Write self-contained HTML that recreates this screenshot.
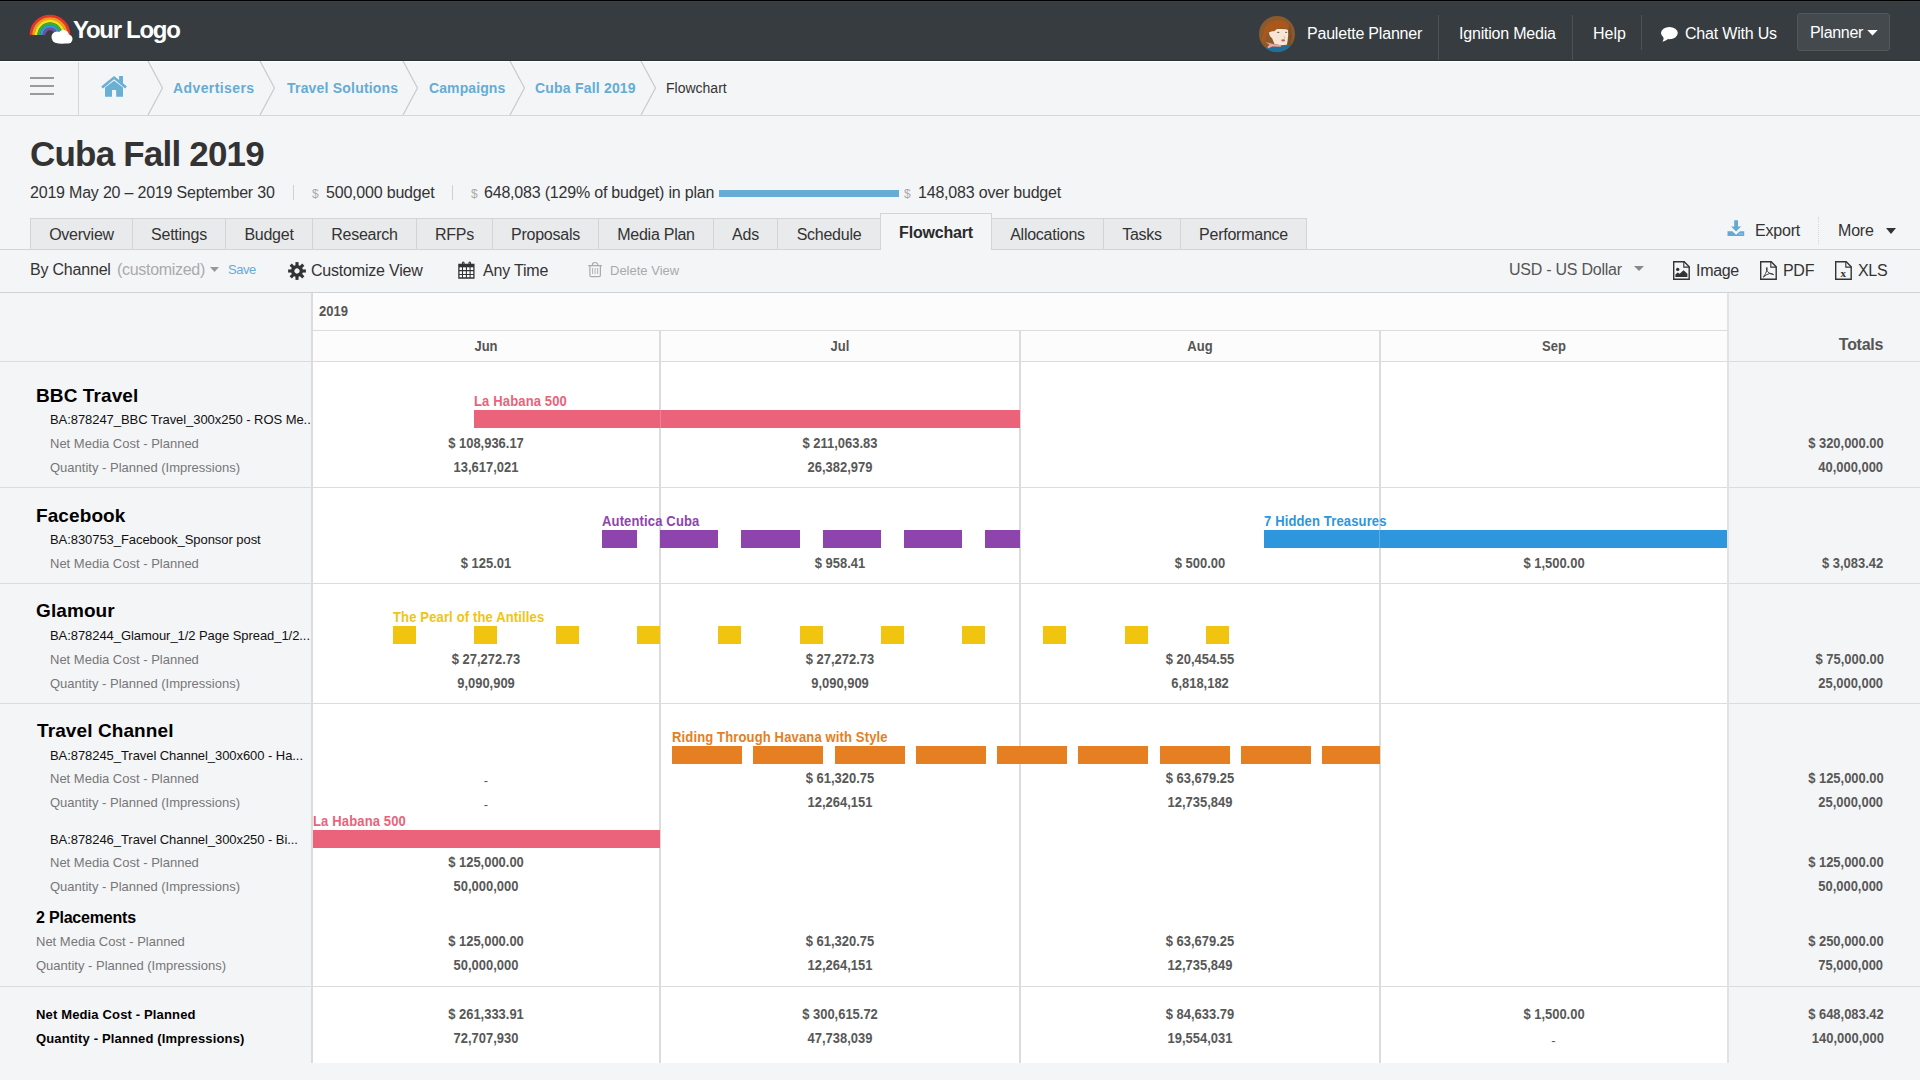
<!DOCTYPE html>
<html><head><meta charset="utf-8"><title>Cuba Fall 2019 - Flowchart</title>
<style>
html,body{margin:0;padding:0;}
body{width:1920px;height:1080px;overflow:hidden;position:relative;background:#f4f5f7;font-family:"Liberation Sans", sans-serif;}
.t{position:absolute;white-space:nowrap;line-height:normal;}
.r{position:absolute;}
</style></head><body>
<div class="r" style="left:0px;top:0px;width:1920px;height:61px;background:#363c40;"></div>
<div class="r" style="left:0px;top:60px;width:1920px;height:1px;background:#2b3033;"></div>
<div class="r" style="left:0px;top:0px;width:1920px;height:1px;background:#000;"></div>
<div class="r" style="left:0px;top:1px;width:1920px;height:1px;background:#3c4246;"></div>
<div class="r" style="left:0px;top:61px;width:1920px;height:1px;background:#ffffff;"></div>
<svg class="r" style="left:28px;top:12px" width="48" height="34" viewBox="0 0 48 34">
<g fill="none" stroke-width="2.7">
<path d="M3 23 A19 19 0 0 1 41 23" stroke="#e8322a"/>
<path d="M5.6 23 A16.4 16.4 0 0 1 38.4 23" stroke="#f39a1e"/>
<path d="M8.2 23 A13.8 13.8 0 0 1 35.8 23" stroke="#f2e21b"/>
<path d="M10.8 23 A11.2 11.2 0 0 1 33.2 23" stroke="#3dab3a"/>
<path d="M13.4 23 A8.6 8.6 0 0 1 30.6 23" stroke="#2a9ad8"/>
<path d="M16 23 A6 6 0 0 1 28 23" stroke="#7a4ca0"/>
</g>
<g fill="#fff"><circle cx="29" cy="25" r="5.5"/><circle cx="35.5" cy="23.5" r="5.5"/><circle cx="40" cy="27" r="4.5"/><ellipse cx="34" cy="28" rx="9.5" ry="3.8"/></g>
</svg>
<div class="t" style="left:73px;top:16px;font-size:24px;font-weight:700;color:#fff;letter-spacing:-1.3px;">Your Logo</div>
<svg class="r" style="left:1259px;top:16px" width="36" height="36" viewBox="0 0 36 36">
<defs><clipPath id="av"><circle cx="18" cy="18" r="18"/></clipPath></defs>
<g clip-path="url(#av)">
<rect width="36" height="36" fill="#8a5a2c"/>
<path d="M31 8 L33 20 L31.5 30 L29 30 L30 14Z" fill="#7a4e26"/>
<path d="M2.4 24.7 L4 18 L6 11 L10.2 5.9 L15.5 4.3 L22 4.1 L27 5.5 L29.8 9.6 L29.4 13.3 L27 12.9 L24.5 11.6 L22 12.4 L18.8 12.4 L15.1 15.3 L13.9 18.2 L12.2 16.5 L9.8 14.9 L8 19 L6.1 25 L4 27Z" fill="#a8581c"/>
<path d="M9.8 16.5 L13.1 15.3 L15.1 15.3 L18 12.9 L22 12.9 L27 13.3 L29 14.1 L29.2 19 L28.6 24.7 L27.8 28.8 L22 29.2 L15.5 28 L13.1 22.2 L11 20.2Z" fill="#f7e6d3"/>
<path d="M17.6 16.3 Q19.2 15.2 20.8 16.3 Q19.2 17.2 17.6 16.3Z" fill="#2a2018"/>
<path d="M25.8 16.3 Q27.2 15.3 28.4 16.3 Q27.2 17.1 25.8 16.3Z" fill="#2a2018"/>
<path d="M25 20 L26 21.8 L24.8 22" fill="none" stroke="#c9a58f" stroke-width="0.6"/>
<ellipse cx="24.2" cy="24.4" rx="1.9" ry="1.1" fill="#b3625f"/>
<path d="M7.3 31.2 L13.5 30 L22 30.4 L29.8 29.6 L32.7 31.2 L34 36 L6 36Z" fill="#1e6f9e"/>
<path d="M6.5 25.9 L13.9 28 L22 29.2 L22 30.8 L13.5 30.4 L9.4 32.3 L8.2 31 L10.6 28.8Z" fill="#f1a3a0"/>
</g></svg>
<div class="t" style="left:1307px;top:25px;font-size:16px;font-weight:400;color:#fff;letter-spacing:-0.2px;">Paulette Planner</div>
<div class="r" style="left:1438px;top:15px;width:1px;height:45px;background:#4c5256;"></div>
<div class="t" style="left:1459px;top:25px;font-size:16px;font-weight:400;color:#fff;letter-spacing:-0.2px;">Ignition Media</div>
<div class="r" style="left:1572px;top:15px;width:1px;height:45px;background:#4c5256;"></div>
<div class="t" style="left:1593px;top:25px;font-size:16px;font-weight:400;color:#fff;">Help</div>
<div class="r" style="left:1641px;top:15px;width:1px;height:35px;background:#4c5256;"></div>
<svg class="r" style="left:1660px;top:26px" width="19" height="17" viewBox="0 0 19 17">
<ellipse cx="9.4" cy="7.1" rx="8.4" ry="6.1" fill="#fff"/><path d="M3.5 10.5 Q4.2 13.5 2.5 15.8 Q6 15 8.5 12.8Z" fill="#fff"/></svg>
<div class="t" style="left:1685px;top:25px;font-size:16px;font-weight:400;color:#fff;letter-spacing:-0.2px;">Chat With Us</div>
<div class="r" style="left:1797px;top:13px;width:93px;height:38px;background:#44494e;border:1px solid #55585a;border-radius:3px;box-sizing:border-box;"></div>
<div class="t" style="left:1810px;top:24px;font-size:16px;font-weight:400;color:#fff;letter-spacing:-0.3px;">Planner</div>
<svg class="r" style="left:1867px;top:30px" width="11" height="6" viewBox="0 0 11 6"><path d="M0.3 0H10.7L5.5 5.4Z" fill="#fff"/></svg>
<div class="r" style="left:0px;top:62px;width:1920px;height:53px;background:#f4f5f7;"></div>
<div class="r" style="left:0px;top:115px;width:1920px;height:1px;background:#d5d6d8;"></div>
<div class="r" style="left:30px;top:77px;width:24px;height:2px;background:#9a9a9a;"></div>
<div class="r" style="left:30px;top:85px;width:24px;height:2px;background:#9a9a9a;"></div>
<div class="r" style="left:30px;top:93px;width:24px;height:2px;background:#9a9a9a;"></div>
<div class="r" style="left:78px;top:62px;width:1px;height:53px;background:#d5d6d8;"></div>
<svg class="r" style="left:101px;top:75px" width="27" height="23" viewBox="0 0 27 23">
<path d="M13.1 0.9 L0.2 11.4 L1.9 13.4 L13.1 4.2 L24.2 13.4 L25.9 11.4 L22 8.2 V1.1 H18.1 V5 Z" fill="#6aafd4"/>
<path d="M4 12.5 L13.1 5.7 L22 12.5 V21.7 H15.2 V15.1 H11 V21.7 H4Z" fill="#6aafd4"/>
</svg>
<svg class="r" style="left:147px;top:61px" width="18" height="54" viewBox="0 0 18 54"><path d="M1 0 L15.5 27 L1 54" fill="none" stroke="#c9cacc" stroke-width="1.2"/></svg>
<svg class="r" style="left:259px;top:61px" width="18" height="54" viewBox="0 0 18 54"><path d="M1 0 L15.5 27 L1 54" fill="none" stroke="#c9cacc" stroke-width="1.2"/></svg>
<svg class="r" style="left:402px;top:61px" width="18" height="54" viewBox="0 0 18 54"><path d="M1 0 L15.5 27 L1 54" fill="none" stroke="#c9cacc" stroke-width="1.2"/></svg>
<svg class="r" style="left:509px;top:61px" width="18" height="54" viewBox="0 0 18 54"><path d="M1 0 L15.5 27 L1 54" fill="none" stroke="#c9cacc" stroke-width="1.2"/></svg>
<svg class="r" style="left:640px;top:61px" width="18" height="54" viewBox="0 0 18 54"><path d="M1 0 L15.5 27 L1 54" fill="none" stroke="#c9cacc" stroke-width="1.2"/></svg>
<div class="t" style="left:173px;top:80px;font-size:14px;font-weight:700;color:#65acd4;letter-spacing:0.4px;">Advertisers</div>
<div class="t" style="left:287px;top:80px;font-size:14px;font-weight:700;color:#65acd4;letter-spacing:0.2px;">Travel Solutions</div>
<div class="t" style="left:429px;top:80px;font-size:14px;font-weight:700;color:#65acd4;letter-spacing:0.1px;">Campaigns</div>
<div class="t" style="left:535px;top:80px;font-size:14px;font-weight:700;color:#65acd4;letter-spacing:0.2px;">Cuba Fall 2019</div>
<div class="t" style="left:666px;top:80px;font-size:14px;font-weight:400;color:#333;">Flowchart</div>
<div class="t" style="left:30px;top:134px;font-size:35px;font-weight:700;color:#333;letter-spacing:-0.8px;">Cuba Fall 2019</div>
<div class="t" style="left:30px;top:184px;font-size:16px;font-weight:400;color:#333;letter-spacing:-0.2px;">2019 May 20 – 2019 September 30</div>
<div class="r" style="left:293px;top:185px;width:1px;height:15px;background:#cfd0d2;"></div>
<div class="t" style="left:312px;top:187px;font-size:12px;font-weight:400;color:#aaa;">$</div>
<div class="t" style="left:326px;top:184px;font-size:16px;font-weight:400;color:#333;letter-spacing:-0.2px;">500,000 budget</div>
<div class="r" style="left:452px;top:185px;width:1px;height:15px;background:#cfd0d2;"></div>
<div class="t" style="left:471px;top:187px;font-size:12px;font-weight:400;color:#aaa;">$</div>
<div class="t" style="left:484px;top:184px;font-size:16px;font-weight:400;color:#333;letter-spacing:-0.2px;">648,083 (129% of budget) in plan</div>
<div class="r" style="left:719px;top:190px;width:180px;height:7px;background:#67acd4;"></div>
<div class="t" style="left:904px;top:187px;font-size:12px;font-weight:400;color:#aaa;">$</div>
<div class="t" style="left:918px;top:184px;font-size:16px;font-weight:400;color:#333;letter-spacing:-0.2px;">148,083 over budget</div>
<div class="r" style="left:0px;top:249px;width:1920px;height:1px;background:#d3d4d6;"></div>
<div class="r" style="left:30px;top:218px;width:103px;height:31px;background:#e9eaec;border:1px solid #d3d4d6;border-bottom:none;box-sizing:border-box;"></div>
<div class="t" style="left:-218.5px;width:600px;text-align:center;top:226px;font-size:16px;font-weight:400;color:#333;letter-spacing:-0.25px;">Overview</div>
<div class="r" style="left:132px;top:218px;width:94px;height:31px;background:#e9eaec;border:1px solid #d3d4d6;border-bottom:none;box-sizing:border-box;"></div>
<div class="t" style="left:-121.0px;width:600px;text-align:center;top:226px;font-size:16px;font-weight:400;color:#333;letter-spacing:-0.25px;">Settings</div>
<div class="r" style="left:225px;top:218px;width:88px;height:31px;background:#e9eaec;border:1px solid #d3d4d6;border-bottom:none;box-sizing:border-box;"></div>
<div class="t" style="left:-31.0px;width:600px;text-align:center;top:226px;font-size:16px;font-weight:400;color:#333;letter-spacing:-0.25px;">Budget</div>
<div class="r" style="left:312px;top:218px;width:105px;height:31px;background:#e9eaec;border:1px solid #d3d4d6;border-bottom:none;box-sizing:border-box;"></div>
<div class="t" style="left:64.5px;width:600px;text-align:center;top:226px;font-size:16px;font-weight:400;color:#333;letter-spacing:-0.25px;">Research</div>
<div class="r" style="left:416px;top:218px;width:77px;height:31px;background:#e9eaec;border:1px solid #d3d4d6;border-bottom:none;box-sizing:border-box;"></div>
<div class="t" style="left:154.5px;width:600px;text-align:center;top:226px;font-size:16px;font-weight:400;color:#333;letter-spacing:-0.25px;">RFPs</div>
<div class="r" style="left:492px;top:218px;width:107px;height:31px;background:#e9eaec;border:1px solid #d3d4d6;border-bottom:none;box-sizing:border-box;"></div>
<div class="t" style="left:245.5px;width:600px;text-align:center;top:226px;font-size:16px;font-weight:400;color:#333;letter-spacing:-0.25px;">Proposals</div>
<div class="r" style="left:598px;top:218px;width:116px;height:31px;background:#e9eaec;border:1px solid #d3d4d6;border-bottom:none;box-sizing:border-box;"></div>
<div class="t" style="left:356.0px;width:600px;text-align:center;top:226px;font-size:16px;font-weight:400;color:#333;letter-spacing:-0.25px;">Media Plan</div>
<div class="r" style="left:713px;top:218px;width:65px;height:31px;background:#e9eaec;border:1px solid #d3d4d6;border-bottom:none;box-sizing:border-box;"></div>
<div class="t" style="left:445.5px;width:600px;text-align:center;top:226px;font-size:16px;font-weight:400;color:#333;letter-spacing:-0.25px;">Ads</div>
<div class="r" style="left:777px;top:218px;width:104px;height:31px;background:#e9eaec;border:1px solid #d3d4d6;border-bottom:none;box-sizing:border-box;"></div>
<div class="t" style="left:529.0px;width:600px;text-align:center;top:226px;font-size:16px;font-weight:400;color:#333;letter-spacing:-0.25px;">Schedule</div>
<div class="r" style="left:880px;top:213px;width:112px;height:37px;background:#f4f5f7;border:1px solid #d3d4d6;border-bottom:none;box-sizing:border-box;"></div>
<div class="t" style="left:636.0px;width:600px;text-align:center;top:224px;font-size:16px;font-weight:700;color:#2b2b2b;letter-spacing:-0.2px;">Flowchart</div>
<div class="r" style="left:991px;top:218px;width:113px;height:31px;background:#e9eaec;border:1px solid #d3d4d6;border-bottom:none;box-sizing:border-box;"></div>
<div class="t" style="left:747.5px;width:600px;text-align:center;top:226px;font-size:16px;font-weight:400;color:#333;letter-spacing:-0.25px;">Allocations</div>
<div class="r" style="left:1103px;top:218px;width:78px;height:31px;background:#e9eaec;border:1px solid #d3d4d6;border-bottom:none;box-sizing:border-box;"></div>
<div class="t" style="left:842.0px;width:600px;text-align:center;top:226px;font-size:16px;font-weight:400;color:#333;letter-spacing:-0.25px;">Tasks</div>
<div class="r" style="left:1180px;top:218px;width:127px;height:31px;background:#e9eaec;border:1px solid #d3d4d6;border-bottom:none;box-sizing:border-box;"></div>
<div class="t" style="left:943.5px;width:600px;text-align:center;top:226px;font-size:16px;font-weight:400;color:#333;letter-spacing:-0.25px;">Performance</div>
<svg class="r" style="left:1727px;top:220px" width="18" height="17" viewBox="0 0 18 17">
<path d="M7.2 0.3H11V6.4H14.1L9.1 11.4L4.1 6.4H7.2Z" fill="#62aad5"/>
<path d="M0.5 11.2H5.3L9.1 14.8L12.9 11.2H17.2V15.9H0.5Z" fill="#62aad5"/>
<rect x="12.5" y="13.2" width="0.8" height="1.3" fill="#d6e8f3"/><rect x="14.6" y="13.2" width="0.8" height="1.3" fill="#d6e8f3"/></svg>
<div class="t" style="left:1755px;top:222px;font-size:16px;font-weight:400;color:#333;letter-spacing:-0.2px;">Export</div>
<div class="r" style="left:1818px;top:217px;width:0;height:28px;border-left:1px dotted #d6d6d6"></div>
<div class="t" style="left:1838px;top:222px;font-size:16px;font-weight:400;color:#333;letter-spacing:-0.2px;">More</div>
<svg class="r" style="left:1886px;top:228px" width="10" height="6" viewBox="0 0 10 6"><path d="M0 0H10L5 6Z" fill="#333"/></svg>
<div class="t" style="left:30px;top:261px;font-size:16px;font-weight:400;color:#333;letter-spacing:-0.2px;">By Channel</div>
<div class="t" style="left:117px;top:261px;font-size:16px;font-weight:400;color:#aaa;letter-spacing:-0.3px;">(customized)</div>
<svg class="r" style="left:210px;top:267px" width="9" height="5" viewBox="0 0 9 5"><path d="M0 0H9L4.5 5Z" fill="#999"/></svg>
<div class="t" style="left:228px;top:262px;font-size:13px;font-weight:400;color:#65acd4;letter-spacing:-0.5px;">Save</div>
<svg class="r" style="left:288px;top:262px" width="18" height="18" viewBox="-8.7 -8.7 17.4 17.4"><g fill="#333"><rect x="-1.5" y="-8.6" width="3" height="4" transform="rotate(0)"/><rect x="-1.5" y="-8.6" width="3" height="4" transform="rotate(45)"/><rect x="-1.5" y="-8.6" width="3" height="4" transform="rotate(90)"/><rect x="-1.5" y="-8.6" width="3" height="4" transform="rotate(135)"/><rect x="-1.5" y="-8.6" width="3" height="4" transform="rotate(180)"/><rect x="-1.5" y="-8.6" width="3" height="4" transform="rotate(225)"/><rect x="-1.5" y="-8.6" width="3" height="4" transform="rotate(270)"/><rect x="-1.5" y="-8.6" width="3" height="4" transform="rotate(315)"/></g><circle r="4.2" fill="none" stroke="#333" stroke-width="3.3"/></svg>
<div class="t" style="left:311px;top:262px;font-size:16px;font-weight:400;color:#333;letter-spacing:-0.2px;">Customize View</div>
<svg class="r" style="left:458px;top:261px" width="17" height="18" viewBox="0 0 17 18">
<rect x="0.9" y="3" width="15" height="14" fill="#fff"/>
<path d="M0.9 3.5H15.9V17H0.9Z" fill="none" stroke="#333" stroke-width="1.3"/>
<rect x="0.9" y="3" width="15" height="3.3" fill="#333"/>
<path d="M4.5 5.5V2.2 Q4.5 1 5.3 1 Q6.1 1 6.1 2.2V5.5M11 5.5V2.2 Q11 1 11.8 1 Q12.6 1 12.6 2.2V5.5" fill="none" stroke="#333" stroke-width="1.1"/>
<path d="M4.5 6V17M8.4 6V17M12.1 6V17M0.9 9.6H15.9M0.9 13.5H15.9" stroke="#333" stroke-width="1.1"/>
</svg>
<div class="t" style="left:483px;top:262px;font-size:16px;font-weight:400;color:#333;letter-spacing:-0.2px;">Any Time</div>
<svg class="r" style="left:588px;top:261px" width="15" height="17" viewBox="0 0 15 17">
<path d="M0.2 4.6H14M4.5 4.6V3.6 Q4.5 1.5 7.1 1.5 Q9.7 1.5 9.7 3.6V4.6" stroke="#ababab" stroke-width="1.2" fill="none"/>
<path d="M1.9 4.6V14.3 Q1.9 15.7 3.3 15.7H11 Q12.4 15.7 12.4 14.3V4.6" fill="none" stroke="#ababab" stroke-width="1.2"/>
<path d="M4.6 7V13M7.1 7V13M9.6 7V13" stroke="#ababab" stroke-width="0.9"/></svg>
<div class="t" style="left:610px;top:263px;font-size:13px;font-weight:400;color:#aaa;">Delete View</div>
<div class="t" style="left:1509px;top:261px;font-size:16px;font-weight:400;color:#555;letter-spacing:-0.25px;">USD - US Dollar</div>
<svg class="r" style="left:1634px;top:266px" width="10" height="5" viewBox="0 0 10 5"><path d="M0 0H10L5 5Z" fill="#888"/></svg>
<svg class="r" style="left:1673px;top:261px" width="17" height="19" viewBox="0 0 17 19">
<path d="M0.7 0.7H11.2L16.2 5.7V18.2H0.7Z" fill="none" stroke="#333" stroke-width="1.4"/><path d="M10.8 0.7V6.1H16.2" fill="none" stroke="#333" stroke-width="1.1"/>
<circle cx="4.7" cy="8.4" r="1.7" fill="#333"/><path d="M2.4 15.9V13.6L4.8 11.4L6.6 12.8L10.6 9.2L14.4 12.8V15.9Z" fill="#333"/></svg>
<div class="t" style="left:1696px;top:262px;font-size:16px;font-weight:400;color:#333;letter-spacing:-0.3px;">Image</div>
<svg class="r" style="left:1760px;top:261px" width="17" height="19" viewBox="0 0 17 19">
<path d="M0.7 0.7H11.2L16.2 5.7V18.2H0.7Z" fill="none" stroke="#333" stroke-width="1.4"/><path d="M10.8 0.7V6.1H16.2" fill="none" stroke="#333" stroke-width="1.1"/>
<path d="M3.3 16.2 Q5.8 13 7.2 8.5 Q7.5 6.8 6.8 6.4 Q6 6.6 6.6 9 Q8 12.5 13.6 13.6 Q12.5 12.2 9.5 12.6 Q6 13.4 3.3 16.2Z" fill="none" stroke="#333" stroke-width="0.9"/></svg>
<div class="t" style="left:1783px;top:262px;font-size:16px;font-weight:400;color:#333;letter-spacing:-0.3px;">PDF</div>
<svg class="r" style="left:1835px;top:261px" width="17" height="19" viewBox="0 0 17 19">
<path d="M0.7 0.7H11.2L16.2 5.7V18.2H0.7Z" fill="none" stroke="#333" stroke-width="1.4"/><path d="M10.8 0.7V6.1H16.2" fill="none" stroke="#333" stroke-width="1.1"/>
<text x="8.2" y="15.6" font-family="Liberation Serif" font-size="11" font-weight="700" text-anchor="middle" fill="#333">x</text></svg>
<div class="t" style="left:1858px;top:262px;font-size:16px;font-weight:400;color:#333;letter-spacing:-0.3px;">XLS</div>
<div class="r" style="left:313px;top:292px;width:1414px;height:69px;background:#fcfcfc;"></div>
<div class="r" style="left:313px;top:361px;width:1414px;height:702px;background:#fff;"></div>
<div class="r" style="left:0px;top:292px;width:1920px;height:1px;background:#d0d1d3;"></div>
<div class="r" style="left:312px;top:330px;width:1415px;height:1px;background:#dcdcdc;"></div>
<div class="r" style="left:0px;top:361px;width:1920px;height:1px;background:#dcdcdc;"></div>
<div class="r" style="left:0px;top:487px;width:1920px;height:1px;background:#dcdcdc;"></div>
<div class="r" style="left:0px;top:583px;width:1920px;height:1px;background:#dcdcdc;"></div>
<div class="r" style="left:0px;top:703px;width:1920px;height:1px;background:#dcdcdc;"></div>
<div class="r" style="left:0px;top:986px;width:1920px;height:1px;background:#dcdcdc;"></div>
<div class="r" style="left:311px;top:293px;width:2px;height:770px;background:#dcdcdc;"></div>
<div class="r" style="left:1727px;top:293px;width:2px;height:770px;background:#e2e2e2;"></div>
<div class="r" style="left:659px;top:330px;width:2px;height:733px;background:#dcdcdc;"></div>
<div class="r" style="left:1019px;top:330px;width:2px;height:733px;background:#dcdcdc;"></div>
<div class="r" style="left:1379px;top:330px;width:2px;height:733px;background:#dcdcdc;"></div>
<div class="t" style="left:319px;top:303px;font-size:14px;font-weight:700;color:#555;transform:scaleX(0.93);transform-origin:0 0;">2019</div>
<div class="t" style="left:186px;width:600px;text-align:center;top:338px;font-size:14px;font-weight:700;color:#555;transform:scaleX(0.93);transform-origin:50% 0;">Jun</div>
<div class="t" style="left:540px;width:600px;text-align:center;top:338px;font-size:14px;font-weight:700;color:#555;transform:scaleX(0.93);transform-origin:50% 0;">Jul</div>
<div class="t" style="left:900px;width:600px;text-align:center;top:338px;font-size:14px;font-weight:700;color:#555;transform:scaleX(0.93);transform-origin:50% 0;">Aug</div>
<div class="t" style="left:1253.5px;width:600px;text-align:center;top:338px;font-size:14px;font-weight:700;color:#555;transform:scaleX(0.93);transform-origin:50% 0;">Sep</div>
<div class="t" style="right:37px;top:336px;font-size:16px;font-weight:700;color:#555;letter-spacing:-0.3px;">Totals</div>
<div class="t" style="left:36px;top:385px;font-size:19px;font-weight:700;color:#000;letter-spacing:0.1px;">BBC Travel</div>
<div class="t" style="left:50px;top:412px;font-size:13px;font-weight:400;color:#111;letter-spacing:-0.06px;">BA:878247_BBC Travel_300x250 - ROS Me..</div>
<div class="t" style="left:50px;top:436px;font-size:13px;font-weight:400;color:#777;">Net Media Cost - Planned</div>
<div class="t" style="left:50px;top:460px;font-size:13px;font-weight:400;color:#777;">Quantity - Planned (Impressions)</div>
<div class="t" style="left:474px;top:393px;font-size:14px;font-weight:700;color:#ea637b;letter-spacing:0.15px;transform:scaleX(0.93);transform-origin:0 0;">La Habana 500</div>
<div class="r" style="left:474px;top:410px;width:546px;height:18px;background:#ea637b;"></div>
<div class="r" style="left:660px;top:410px;width:1px;height:18px;background:rgba(255,255,255,0.2);"></div>
<div class="t" style="left:186px;width:600px;text-align:center;top:435px;font-size:14px;font-weight:700;color:#585858;transform:scaleX(0.925);transform-origin:50% 0;">$ 108,936.17</div>
<div class="t" style="left:540px;width:600px;text-align:center;top:435px;font-size:14px;font-weight:700;color:#585858;transform:scaleX(0.925);transform-origin:50% 0;">$ 211,063.83</div>
<div class="t" style="right:36.5px;top:435px;font-size:14px;font-weight:700;color:#585858;transform:scaleX(0.925);transform-origin:100% 0;">$ 320,000.00</div>
<div class="t" style="left:186px;width:600px;text-align:center;top:459px;font-size:14px;font-weight:700;color:#585858;transform:scaleX(0.925);transform-origin:50% 0;">13,617,021</div>
<div class="t" style="left:540px;width:600px;text-align:center;top:459px;font-size:14px;font-weight:700;color:#585858;transform:scaleX(0.925);transform-origin:50% 0;">26,382,979</div>
<div class="t" style="right:36.5px;top:459px;font-size:14px;font-weight:700;color:#585858;transform:scaleX(0.925);transform-origin:100% 0;">40,000,000</div>
<div class="t" style="left:36px;top:505px;font-size:19px;font-weight:700;color:#000;letter-spacing:0.1px;">Facebook</div>
<div class="t" style="left:50px;top:532px;font-size:13px;font-weight:400;color:#111;letter-spacing:-0.06px;">BA:830753_Facebook_Sponsor post</div>
<div class="t" style="left:50px;top:556px;font-size:13px;font-weight:400;color:#777;">Net Media Cost - Planned</div>
<div class="t" style="left:602px;top:513px;font-size:14px;font-weight:700;color:#8e44ad;letter-spacing:0.15px;transform:scaleX(0.93);transform-origin:0 0;">Autentica Cuba</div>
<div class="r" style="left:602px;top:530px;width:35px;height:18px;background:#8e44ad;"></div>
<div class="r" style="left:660px;top:530px;width:58px;height:18px;background:#8e44ad;"></div>
<div class="r" style="left:741px;top:530px;width:59px;height:18px;background:#8e44ad;"></div>
<div class="r" style="left:823px;top:530px;width:58px;height:18px;background:#8e44ad;"></div>
<div class="r" style="left:904px;top:530px;width:58px;height:18px;background:#8e44ad;"></div>
<div class="r" style="left:985px;top:530px;width:35px;height:18px;background:#8e44ad;"></div>
<div class="t" style="left:1264px;top:513px;font-size:14px;font-weight:700;color:#2d96dc;letter-spacing:0.15px;transform:scaleX(0.93);transform-origin:0 0;">7 Hidden Treasures</div>
<div class="r" style="left:1264px;top:530px;width:463px;height:18px;background:#2d96dc;"></div>
<div class="r" style="left:1379px;top:530px;width:1px;height:18px;background:rgba(255,255,255,0.22);"></div>
<div class="t" style="left:186px;width:600px;text-align:center;top:555px;font-size:14px;font-weight:700;color:#585858;transform:scaleX(0.925);transform-origin:50% 0;">$ 125.01</div>
<div class="t" style="left:540px;width:600px;text-align:center;top:555px;font-size:14px;font-weight:700;color:#585858;transform:scaleX(0.925);transform-origin:50% 0;">$ 958.41</div>
<div class="t" style="left:900px;width:600px;text-align:center;top:555px;font-size:14px;font-weight:700;color:#585858;transform:scaleX(0.925);transform-origin:50% 0;">$ 500.00</div>
<div class="t" style="left:1253.5px;width:600px;text-align:center;top:555px;font-size:14px;font-weight:700;color:#585858;transform:scaleX(0.925);transform-origin:50% 0;">$ 1,500.00</div>
<div class="t" style="right:36.5px;top:555px;font-size:14px;font-weight:700;color:#585858;transform:scaleX(0.925);transform-origin:100% 0;">$ 3,083.42</div>
<div class="t" style="left:36px;top:600px;font-size:19px;font-weight:700;color:#000;letter-spacing:0.1px;">Glamour</div>
<div class="t" style="left:50px;top:628px;font-size:13px;font-weight:400;color:#111;letter-spacing:-0.06px;">BA:878244_Glamour_1/2 Page Spread_1/2...</div>
<div class="t" style="left:50px;top:652px;font-size:13px;font-weight:400;color:#777;">Net Media Cost - Planned</div>
<div class="t" style="left:50px;top:676px;font-size:13px;font-weight:400;color:#777;">Quantity - Planned (Impressions)</div>
<div class="t" style="left:393px;top:609px;font-size:14px;font-weight:700;color:#f1c40f;letter-spacing:0.15px;transform:scaleX(0.93);transform-origin:0 0;">The Pearl of the Antilles</div>
<div class="r" style="left:393px;top:626px;width:23px;height:18px;background:#f1c40f;"></div>
<div class="r" style="left:474px;top:626px;width:23px;height:18px;background:#f1c40f;"></div>
<div class="r" style="left:556px;top:626px;width:23px;height:18px;background:#f1c40f;"></div>
<div class="r" style="left:637px;top:626px;width:23px;height:18px;background:#f1c40f;"></div>
<div class="r" style="left:718px;top:626px;width:23px;height:18px;background:#f1c40f;"></div>
<div class="r" style="left:800px;top:626px;width:23px;height:18px;background:#f1c40f;"></div>
<div class="r" style="left:881px;top:626px;width:23px;height:18px;background:#f1c40f;"></div>
<div class="r" style="left:962px;top:626px;width:23px;height:18px;background:#f1c40f;"></div>
<div class="r" style="left:1043px;top:626px;width:23px;height:18px;background:#f1c40f;"></div>
<div class="r" style="left:1125px;top:626px;width:23px;height:18px;background:#f1c40f;"></div>
<div class="r" style="left:1206px;top:626px;width:23px;height:18px;background:#f1c40f;"></div>
<div class="t" style="left:186px;width:600px;text-align:center;top:651px;font-size:14px;font-weight:700;color:#585858;transform:scaleX(0.925);transform-origin:50% 0;">$ 27,272.73</div>
<div class="t" style="left:540px;width:600px;text-align:center;top:651px;font-size:14px;font-weight:700;color:#585858;transform:scaleX(0.925);transform-origin:50% 0;">$ 27,272.73</div>
<div class="t" style="left:900px;width:600px;text-align:center;top:651px;font-size:14px;font-weight:700;color:#585858;transform:scaleX(0.925);transform-origin:50% 0;">$ 20,454.55</div>
<div class="t" style="right:36.5px;top:651px;font-size:14px;font-weight:700;color:#585858;transform:scaleX(0.925);transform-origin:100% 0;">$ 75,000.00</div>
<div class="t" style="left:186px;width:600px;text-align:center;top:675px;font-size:14px;font-weight:700;color:#585858;transform:scaleX(0.925);transform-origin:50% 0;">9,090,909</div>
<div class="t" style="left:540px;width:600px;text-align:center;top:675px;font-size:14px;font-weight:700;color:#585858;transform:scaleX(0.925);transform-origin:50% 0;">9,090,909</div>
<div class="t" style="left:900px;width:600px;text-align:center;top:675px;font-size:14px;font-weight:700;color:#585858;transform:scaleX(0.925);transform-origin:50% 0;">6,818,182</div>
<div class="t" style="right:36.5px;top:675px;font-size:14px;font-weight:700;color:#585858;transform:scaleX(0.925);transform-origin:100% 0;">25,000,000</div>
<div class="t" style="left:37px;top:720px;font-size:19px;font-weight:700;color:#000;letter-spacing:0.1px;">Travel Channel</div>
<div class="t" style="left:50px;top:748px;font-size:13px;font-weight:400;color:#111;letter-spacing:-0.06px;">BA:878245_Travel Channel_300x600 - Ha...</div>
<div class="t" style="left:50px;top:771px;font-size:13px;font-weight:400;color:#777;">Net Media Cost - Planned</div>
<div class="t" style="left:50px;top:795px;font-size:13px;font-weight:400;color:#777;">Quantity - Planned (Impressions)</div>
<div class="t" style="left:672px;top:729px;font-size:14px;font-weight:700;color:#e67e22;letter-spacing:0.15px;transform:scaleX(0.93);transform-origin:0 0;">Riding Through Havana with Style</div>
<div class="r" style="left:672px;top:746px;width:70px;height:18px;background:#e67e22;"></div>
<div class="r" style="left:753px;top:746px;width:70px;height:18px;background:#e67e22;"></div>
<div class="r" style="left:835px;top:746px;width:70px;height:18px;background:#e67e22;"></div>
<div class="r" style="left:916px;top:746px;width:70px;height:18px;background:#e67e22;"></div>
<div class="r" style="left:997px;top:746px;width:70px;height:18px;background:#e67e22;"></div>
<div class="r" style="left:1078px;top:746px;width:70px;height:18px;background:#e67e22;"></div>
<div class="r" style="left:1160px;top:746px;width:70px;height:18px;background:#e67e22;"></div>
<div class="r" style="left:1241px;top:746px;width:70px;height:18px;background:#e67e22;"></div>
<div class="r" style="left:1322px;top:746px;width:58px;height:18px;background:#e67e22;"></div>
<div class="t" style="left:186px;width:600px;text-align:center;top:773px;font-size:13px;font-weight:400;color:#585858;">-</div>
<div class="t" style="left:540px;width:600px;text-align:center;top:770px;font-size:14px;font-weight:700;color:#585858;transform:scaleX(0.925);transform-origin:50% 0;">$ 61,320.75</div>
<div class="t" style="left:900px;width:600px;text-align:center;top:770px;font-size:14px;font-weight:700;color:#585858;transform:scaleX(0.925);transform-origin:50% 0;">$ 63,679.25</div>
<div class="t" style="right:36.5px;top:770px;font-size:14px;font-weight:700;color:#585858;transform:scaleX(0.925);transform-origin:100% 0;">$ 125,000.00</div>
<div class="t" style="left:186px;width:600px;text-align:center;top:797px;font-size:13px;font-weight:400;color:#585858;">-</div>
<div class="t" style="left:540px;width:600px;text-align:center;top:794px;font-size:14px;font-weight:700;color:#585858;transform:scaleX(0.925);transform-origin:50% 0;">12,264,151</div>
<div class="t" style="left:900px;width:600px;text-align:center;top:794px;font-size:14px;font-weight:700;color:#585858;transform:scaleX(0.925);transform-origin:50% 0;">12,735,849</div>
<div class="t" style="right:36.5px;top:794px;font-size:14px;font-weight:700;color:#585858;transform:scaleX(0.925);transform-origin:100% 0;">25,000,000</div>
<div class="t" style="left:50px;top:832px;font-size:13px;font-weight:400;color:#111;letter-spacing:-0.06px;">BA:878246_Travel Channel_300x250 - Bi...</div>
<div class="t" style="left:50px;top:855px;font-size:13px;font-weight:400;color:#777;">Net Media Cost - Planned</div>
<div class="t" style="left:50px;top:879px;font-size:13px;font-weight:400;color:#777;">Quantity - Planned (Impressions)</div>
<div class="t" style="left:313px;top:813px;font-size:14px;font-weight:700;color:#ea637b;letter-spacing:0.15px;transform:scaleX(0.93);transform-origin:0 0;">La Habana 500</div>
<div class="r" style="left:313px;top:830px;width:347px;height:18px;background:#ea637b;"></div>
<div class="t" style="left:186px;width:600px;text-align:center;top:854px;font-size:14px;font-weight:700;color:#585858;transform:scaleX(0.925);transform-origin:50% 0;">$ 125,000.00</div>
<div class="t" style="right:36.5px;top:854px;font-size:14px;font-weight:700;color:#585858;transform:scaleX(0.925);transform-origin:100% 0;">$ 125,000.00</div>
<div class="t" style="left:186px;width:600px;text-align:center;top:878px;font-size:14px;font-weight:700;color:#585858;transform:scaleX(0.925);transform-origin:50% 0;">50,000,000</div>
<div class="t" style="right:36.5px;top:878px;font-size:14px;font-weight:700;color:#585858;transform:scaleX(0.925);transform-origin:100% 0;">50,000,000</div>
<div class="t" style="left:36px;top:909px;font-size:16px;font-weight:700;color:#000;letter-spacing:-0.2px;">2 Placements</div>
<div class="t" style="left:36px;top:934px;font-size:13px;font-weight:400;color:#777;">Net Media Cost - Planned</div>
<div class="t" style="left:36px;top:958px;font-size:13px;font-weight:400;color:#777;">Quantity - Planned (Impressions)</div>
<div class="t" style="left:186px;width:600px;text-align:center;top:933px;font-size:14px;font-weight:700;color:#585858;transform:scaleX(0.925);transform-origin:50% 0;">$ 125,000.00</div>
<div class="t" style="left:540px;width:600px;text-align:center;top:933px;font-size:14px;font-weight:700;color:#585858;transform:scaleX(0.925);transform-origin:50% 0;">$ 61,320.75</div>
<div class="t" style="left:900px;width:600px;text-align:center;top:933px;font-size:14px;font-weight:700;color:#585858;transform:scaleX(0.925);transform-origin:50% 0;">$ 63,679.25</div>
<div class="t" style="right:36.5px;top:933px;font-size:14px;font-weight:700;color:#585858;transform:scaleX(0.925);transform-origin:100% 0;">$ 250,000.00</div>
<div class="t" style="left:186px;width:600px;text-align:center;top:957px;font-size:14px;font-weight:700;color:#585858;transform:scaleX(0.925);transform-origin:50% 0;">50,000,000</div>
<div class="t" style="left:540px;width:600px;text-align:center;top:957px;font-size:14px;font-weight:700;color:#585858;transform:scaleX(0.925);transform-origin:50% 0;">12,264,151</div>
<div class="t" style="left:900px;width:600px;text-align:center;top:957px;font-size:14px;font-weight:700;color:#585858;transform:scaleX(0.925);transform-origin:50% 0;">12,735,849</div>
<div class="t" style="right:36.5px;top:957px;font-size:14px;font-weight:700;color:#585858;transform:scaleX(0.925);transform-origin:100% 0;">75,000,000</div>
<div class="t" style="left:36px;top:1007px;font-size:13px;font-weight:700;color:#000;letter-spacing:0.15px;">Net Media Cost - Planned</div>
<div class="t" style="left:36px;top:1031px;font-size:13px;font-weight:700;color:#000;letter-spacing:0.15px;">Quantity - Planned (Impressions)</div>
<div class="t" style="left:186px;width:600px;text-align:center;top:1006px;font-size:14px;font-weight:700;color:#585858;transform:scaleX(0.925);transform-origin:50% 0;">$ 261,333.91</div>
<div class="t" style="left:540px;width:600px;text-align:center;top:1006px;font-size:14px;font-weight:700;color:#585858;transform:scaleX(0.925);transform-origin:50% 0;">$ 300,615.72</div>
<div class="t" style="left:900px;width:600px;text-align:center;top:1006px;font-size:14px;font-weight:700;color:#585858;transform:scaleX(0.925);transform-origin:50% 0;">$ 84,633.79</div>
<div class="t" style="left:1253.5px;width:600px;text-align:center;top:1006px;font-size:14px;font-weight:700;color:#585858;transform:scaleX(0.925);transform-origin:50% 0;">$ 1,500.00</div>
<div class="t" style="right:36.5px;top:1006px;font-size:14px;font-weight:700;color:#585858;transform:scaleX(0.925);transform-origin:100% 0;">$ 648,083.42</div>
<div class="t" style="left:186px;width:600px;text-align:center;top:1030px;font-size:14px;font-weight:700;color:#585858;transform:scaleX(0.925);transform-origin:50% 0;">72,707,930</div>
<div class="t" style="left:540px;width:600px;text-align:center;top:1030px;font-size:14px;font-weight:700;color:#585858;transform:scaleX(0.925);transform-origin:50% 0;">47,738,039</div>
<div class="t" style="left:900px;width:600px;text-align:center;top:1030px;font-size:14px;font-weight:700;color:#585858;transform:scaleX(0.925);transform-origin:50% 0;">19,554,031</div>
<div class="t" style="left:1253.5px;width:600px;text-align:center;top:1033px;font-size:13px;font-weight:400;color:#585858;">-</div>
<div class="t" style="right:36.5px;top:1030px;font-size:14px;font-weight:700;color:#585858;transform:scaleX(0.925);transform-origin:100% 0;">140,000,000</div>
</body></html>
